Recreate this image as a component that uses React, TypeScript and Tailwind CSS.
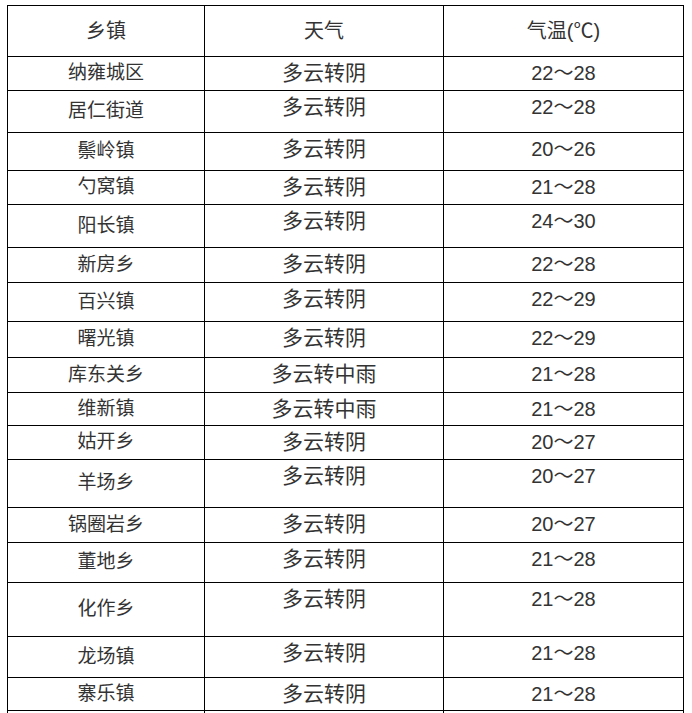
import React from 'react';

// 各乡镇天气预报表
interface Row {
  town: string;
  weather: string;
  temp: string;
  h: string;
}

const rows: Row[] = [
  { town: '纳雍城区', weather: '多云转阴', temp: '22～28', h: 'h-[34px]' },
  { town: '居仁街道', weather: '多云转阴', temp: '22～28', h: 'h-[42px]' },
  { town: '鬃岭镇', weather: '多云转阴', temp: '20～26', h: 'h-[38px]' },
  { town: '勺窝镇', weather: '多云转阴', temp: '21～28', h: 'h-[34px]' },
  { town: '阳长镇', weather: '多云转阴', temp: '24～30', h: 'h-[43px]' },
  { town: '新房乡', weather: '多云转阴', temp: '22～28', h: 'h-[35px]' },
  { town: '百兴镇', weather: '多云转阴', temp: '22～29', h: 'h-[39px]' },
  { town: '曙光镇', weather: '多云转阴', temp: '22～29', h: 'h-[36px]' },
  { town: '库东关乡', weather: '多云转中雨', temp: '21～28', h: 'h-[35px]' },
  { town: '维新镇', weather: '多云转中雨', temp: '21～28', h: 'h-[33px]' },
  { town: '姑开乡', weather: '多云转阴', temp: '20～27', h: 'h-[34px]' },
  { town: '羊场乡', weather: '多云转阴', temp: '20～27', h: 'h-[48px]' },
  { town: '锅圈岩乡', weather: '多云转阴', temp: '20～27', h: 'h-[35px]' },
  { town: '董地乡', weather: '多云转阴', temp: '21～28', h: 'h-[40px]' },
  { town: '化作乡', weather: '多云转阴', temp: '21～28', h: 'h-[54px]' },
  { town: '龙场镇', weather: '多云转阴', temp: '21～28', h: 'h-[41px]' },
  { town: '寨乐镇', weather: '多云转阴', temp: '21～28', h: 'h-[33px]' },
];

const cell = 'border border-black p-0 text-center';

export default function App() {
  return (
    <div className="bg-white pl-[7px] pt-[5px] font-['Liberation_Sans','Noto_Sans_CJK_SC',sans-serif] text-[#333]">
      <table className="table-fixed border-collapse w-[677px]">
        <colgroup>
          <col className="w-[197px]" />
          <col className="w-[239px]" />
          <col className="w-[240px]" />
        </colgroup>
        <thead>
          <tr className="h-[51px] text-[20px]">
            <th className={`${cell} font-normal align-middle`}>乡镇</th>
            <th className={`${cell} font-normal align-middle`}>天气</th>
            <th className={`${cell} font-normal align-middle`}>气温(℃)</th>
          </tr>
        </thead>
        <tbody>
          {rows.map((r) => (
            <tr key={r.town} className={r.h}>
              <td className={`${cell} align-middle text-[19px]`}>{r.town}</td>
              <td className={`${cell} align-top text-[21px] leading-[32px]`}>{r.weather}</td>
              <td className={`${cell} align-top text-[20px] leading-[32px]`}>{r.temp}</td>
            </tr>
          ))}
          <tr className="h-[34px]">
            <td className={cell}></td>
            <td className={cell}></td>
            <td className={cell}></td>
          </tr>
        </tbody>
      </table>
    </div>
  );
}
